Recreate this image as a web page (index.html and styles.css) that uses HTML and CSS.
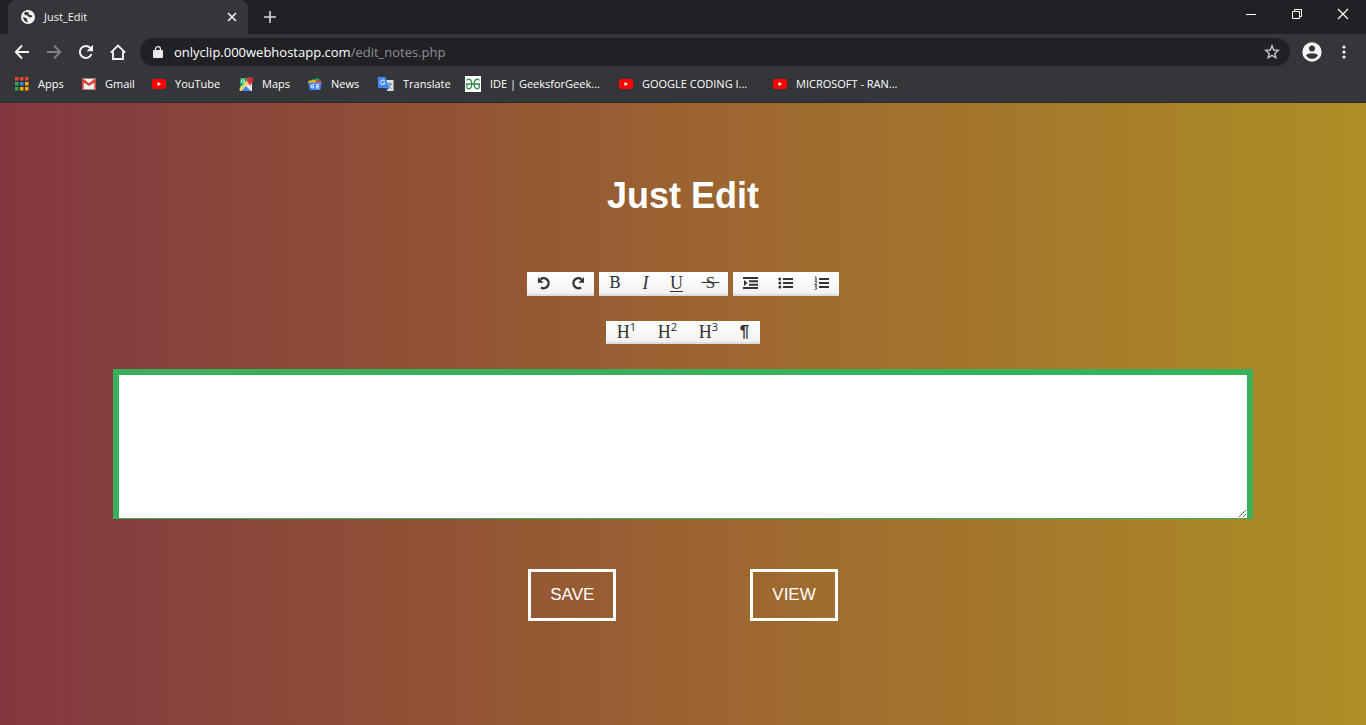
FILE: index.html
```html
<!DOCTYPE html>
<html lang="en">
<head>
<meta charset="utf-8">
<title>Just_Edit</title>
<link rel="stylesheet" href="styles.css">
</head>
<body>
<header class="browser">
  <div class="tabstrip">
    <div class="tab">
      <svg class="globe" viewBox="0 0 14 14"><circle cx="7" cy="7" r="7" fill="#f1f3f4"/><path d="M4 1.800 3 4l1.500 1.300 2.200.3 1 1.400 2.300.4 1.200-1.200-1-1.200-2-.2-.7-1.100.6-1.300z" fill="#35363a"/><path d="M1.800 7l2.700.8 1.800 1.200-.2 1.600 1.100 1.600-2-.2-2-1.500z" fill="#35363a"/></svg>
      <span class="tab-title">Just_Edit</span>
      <button class="icon-btn" aria-label="Close tab"><svg width="10" height="10" viewBox="0 0 10 10"><path d="m1 1 8 8M9 1 1 9" stroke="#f1f3f4" stroke-width="1.6"/></svg></button>
    </div>
    <button class="icon-btn new-tab" aria-label="New tab"><svg width="12" height="12" viewBox="0 0 12 12"><path d="M6 0v12M0 6h12" stroke="#d5d7da" stroke-width="1.6"/></svg></button>
    <div class="window-controls">
      <button class="icon-btn" aria-label="Minimize"><svg width="12" height="12" viewBox="0 0 12 12"><path d="M1 6.5h10" stroke="#fff"/></svg></button>
      <button class="icon-btn" aria-label="Restore"><svg width="12" height="12" viewBox="0 0 12 12"><path d="M1.500 3.500h7v7h-7zM3.500 3.500v-2h7v7h-2" stroke="#fff" fill="none"/></svg></button>
      <button class="icon-btn" aria-label="Close"><svg width="12" height="12" viewBox="0 0 12 12"><path d="m1 1 10 10M11 1 1 11" stroke="#fff" stroke-width="1.2"/></svg></button>
    </div>
  </div>
  <div class="navbar">
    <nav class="nav-buttons">
      <button class="icon-btn" aria-label="Back"><svg width="16" height="16" viewBox="0 0 16 16"><path d="M15 8H2M8 1.500 1.800 8 8 14.500" stroke="#f1f3f4" stroke-width="1.900" fill="none"/></svg></button>
      <button class="icon-btn" aria-label="Forward"><svg width="16" height="16" viewBox="0 0 16 16"><path d="M1 8h13M8 1.500 14.200 8 8 14.500" stroke="#808285" stroke-width="1.900" fill="none"/></svg></button>
      <button class="icon-btn" aria-label="Reload"><svg width="16" height="16" viewBox="0 0 16 16"><path d="M13.500 10A6 6 0 1 1 12.400 4" stroke="#f1f3f4" stroke-width="2" fill="none"/><path d="M15 .8v6.500H8.500z" fill="#f1f3f4"/></svg></button>
      <button class="icon-btn" aria-label="Home"><svg width="16" height="16" viewBox="0 0 16 16"><path d="M.8 8.700 8 1.500l7.200 7.200M3 7.500v7.500h10V7.500" stroke="#f1f3f4" stroke-width="1.900" fill="none"/></svg></button>
    </nav>
    <div class="address">
      <svg width="10" height="12" viewBox="0 0 10 12"><path d="M1 4h8q1 0 1 1v6q0 1-1 1H1q-1 0-1-1V5q0-1 1-1z" fill="#e8eaed"/><path d="M2.500 5V3a2.500 2.300 0 0 1 5 0v2" fill="none" stroke="#e8eaed" stroke-width="1.300"/></svg>
      <span class="url">onlyclip.000webhostapp.com<span class="path">/edit_notes.php</span></span>
      <button class="icon-btn" aria-label="Bookmark this page"><svg width="16" height="16" viewBox="0 0 16 16"><path d="m8 1.800 1.700 4.200 4.500.4-3.400 3 1.100 4.400L8 11.400l-3.900 2.400 1.100-4.400-3.400-3L6.300 6z" fill="none" stroke="#c4c7ca" stroke-width="1.400"/></svg></button>
    </div>
    <button class="icon-btn profile" aria-label="Profile"><svg width="20" height="20" viewBox="0 0 20 20"><circle cx="10" cy="10" r="9.700" fill="#f1f3f4"/><circle cx="10" cy="6.500" r="3" fill="#35363a"/><path d="M4 13.600c1.500-3 10.500-3 12 0a7.200 7.200 0 0 1-12 0z" fill="#35363a"/></svg></button>
    <button class="icon-btn menu" aria-label="Menu"><svg width="4" height="14" viewBox="0 0 4 14"><g fill="#f1f3f4"><circle cx="2" cy="2" r="1.600"/><circle cx="2" cy="7" r="1.600"/><circle cx="2" cy="12" r="1.600"/></g></svg></button>
  </div>
  <nav class="bookmarks">
    <a class="bookmark" href="#"><svg class="mark" viewBox="0 0 14 14"><path d="M0 0h3.500v3.500H0zM5 0h3.500v3.500H5zM10 0h3.500v3.500H10z" fill="#ea4335"/><path d="M0 5h3.500v3.500H0zM0 10h3.500v3.500H0z" fill="#34a853"/><path d="M5 5h3.500v3.500H5z" fill="#2b88f5"/><path d="M10 5h3.500v3.500H10zM5 10h3.500v3.500H5zM10 10h3.500v3.500H10z" fill="#f9ab00"/></svg>Apps</a>
    <a class="bookmark" href="#"><svg class="mark" viewBox="0 0 14 14"><path d="M0 1.500h14v11H0z" fill="#eceff1"/><path d="M0 12.500v-10l1-1 6 4.700 6-4.700 1 1v10h-1.700v-7L7 9 1.700 5.500v7z" fill="#dc4335"/></svg>Gmail</a>
    <a class="bookmark" href="#"><svg class="mark" viewBox="0 0 14 14"><rect y="2" width="14" height="10" rx="2" fill="red"/><path d="M5.500 5v4L9.200 7z" fill="#fff"/></svg>YouTube</a>
    <a class="bookmark" href="#"><svg class="mark" viewBox="0 0 14 14"><path d="M1 1.500h12V14H1z" fill="#e8eaed"/><path d="M1 1.500h9L1 11z" fill="#159e58"/><path d="m2 14 5-5 5 5z" fill="#4285f4"/><path d="m0 12.500 9-9 1.500 2L2 14z" fill="#ffd34d"/><circle cx="4" cy="4.300" r="1.600" fill="none" stroke="#fff"/><path d="M11 9C10 6.500 8 5.500 8 3.200a3 3 0 0 1 6 0C14 5.500 12 6.500 11 9z" fill="#e53935"/><circle cx="11" cy="3.200" r="1" fill="#8e211c"/></svg>Maps</a>
    <a class="bookmark" href="#"><svg class="mark" viewBox="0 0 14 14"><path d="m2 3 9-2 1 5H2z" fill="#16a765"/><path d="m7 3 6.500 1-1 6-6-2z" fill="#ea4335"/><path d="m0 4 7-1 2 5H1z" fill="#fbbc04"/><path d="M.5 5.500h13l-1 7.500h-11z" fill="#4385f5"/><path d="M6 7.800H4.500a1.500 1.500 0 1 0 1.500 1.500H4.700M8 7.700h3M8 9.400h3M8 11h3" fill="none" stroke="#fff"/></svg>News</a>
    <a class="bookmark" href="#"><svg class="mark wide" viewBox="0 0 16 14"><path d="M6 3h9.500v11H9z" fill="#dce0e5"/><path d="M9 7h5M11.500 5.500V7M13 7c-.5 2-2 3-3 4M10 8c1 2 2 2.500 3.500 3.500" stroke="#607d8b" fill="none"/><path d="M0 0h7.500L11 11H1q-1 0-1-1z" fill="#4688f1"/><path d="M6.700 4A2.300 2.300 0 1 0 7 6H5" stroke="#fff" fill="none"/><path d="M7 11h4l-2 2.500z" fill="#174ea6"/></svg>Translate</a>
    <a class="bookmark" href="#"><svg class="mark wide" viewBox="0 0 16 16"><path d="M0 0h16v16H0z" fill="#fff"/><path d="M1.500 4.500C3 2 6.800 3 6.800 8S3 14 1.800 11.500M1 8h14M14.500 4.500C13 2 9.200 3 9.200 8s3.800 6 5 3.500V8.500M1.800 11.500V8.500" stroke="#2f8d46" stroke-width="1.300" fill="none"/></svg>IDE | GeeksforGeek...</a>
    <a class="bookmark" href="#"><svg class="mark" viewBox="0 0 14 14"><rect y="2" width="14" height="10" rx="2" fill="red"/><path d="M5.500 5v4L9.200 7z" fill="#fff"/></svg>GOOGLE CODING I...</a>
    <a class="bookmark" href="#"><svg class="mark" viewBox="0 0 14 14"><rect y="2" width="14" height="10" rx="2" fill="red"/><path d="M5.500 5v4L9.200 7z" fill="#fff"/></svg>MICROSOFT - RAN...</a>
  </nav>
</header>
<main class="editor-page">
  <h1 class="title">Just Edit</h1>
  <div class="toolbar">
    <div class="group history">
      <button class="tool" aria-label="Undo"><svg width="14" height="14" viewBox="0 0 14 14"><path d="M3.500 3.300A5 5 0 1 1 4 11.500" fill="none" stroke="#333" stroke-width="2.300"/><path d="M1 1v5.700h5.700z" fill="#333"/></svg></button>
      <button class="tool" aria-label="Redo"><svg width="14" height="14" viewBox="0 0 14 14"><path d="M10.500 3.300A5 5 0 1 0 10 11.500" fill="none" stroke="#333" stroke-width="2.300"/><path d="M13 1v5.700H7.300z" fill="#333"/></svg></button>
    </div>
    <div class="group format">
      <button class="tool bold">B</button>
      <button class="tool"><i>I</i></button>
      <button class="tool"><u>U</u></button>
      <button class="tool"><s>&nbsp;S&nbsp;</s></button>
    </div>
    <div class="group lists">
      <button class="tool" aria-label="Indent"><svg width="15" height="12" viewBox="0 0 15 12"><path d="M0 1h15M6 4.300h9M6 7.700h9M0 11h15" stroke="#333" stroke-width="2"/><path d="M1 3v6l3.500-3z" fill="#333"/></svg></button>
      <button class="tool" aria-label="Bulleted list"><svg width="15" height="12" viewBox="0 0 15 12"><path d="M5 2h10M5 6h10M5 10h10" stroke="#333" stroke-width="2"/><g fill="#333"><circle cx="1.800" cy="2" r="1.500"/><circle cx="1.800" cy="6" r="1.500"/><circle cx="1.800" cy="10" r="1.500"/></g></svg></button>
      <button class="tool" aria-label="Numbered list"><svg width="15" height="14" viewBox="0 0 15 14"><path d="M5 3h10M5 7h10M5 11h10" stroke="#333" stroke-width="2"/><path d="M1 1h1v3M.8 4h2.400M.7 5.500h1.800v1.200L.8 8.500h2.400M.7 10h2L1.500 11.300l1.200.6L2 13.400H.7" stroke="#333" stroke-width=".9" fill="none"/></svg></button>
    </div>
  </div>
  <div class="toolbar second">
    <div class="group blocks">
      <button class="tool">H<sup>1</sup></button>
      <button class="tool">H<sup>2</sup></button>
      <button class="tool">H<sup>3</sup></button>
      <button class="tool pilcrow">¶</button>
    </div>
  </div>
  <textarea class="note" aria-label="Note"></textarea>
  <div class="actions">
    <button class="action">SAVE</button>
    <button class="action">VIEW</button>
  </div>
</main>
</body>
</html>
```

FILE: styles.css
```css
* { box-sizing: border-box; }
body {
  margin: 0;
  min-height: 100vh;
  display: flex;
  flex-direction: column;
  font-family: "Liberation Sans", Arial, sans-serif;
}
button { margin: 0; padding: 0; border: 0; background: none; font: inherit; }
svg { display: block; flex: none; }

.browser {
  background: #35363a;
  border-bottom: 1px solid #292a2d;
  color: #f1f3f4;
  font: 12px/16px "Open Sans", sans-serif;
}
.icon-btn { display: flex; align-items: center; justify-content: center; }
.tabstrip { display: flex; align-items: center; height: 34px; padding-left: 8px; background: #202124; }
.tab {
  display: flex;
  align-items: center;
  gap: 9px;
  width: 240px;
  height: 34px;
  padding: 0 11px 0 13px;
  border-radius: 8px 8px 0 0;
  background: #35363a;
  font-size: 11px;
}
.globe { width: 14px; height: 14px; }
.tab-title { flex: 1; }
.new-tab { margin-left: 16px; }
.window-controls { display: flex; gap: 34px; margin-left: auto; padding: 0 17px 6px 0; }

.navbar { display: flex; align-items: center; height: 36px; padding: 0 20px 0 14px; }
.nav-buttons { display: flex; gap: 16px; }
.address {
  flex: 1;
  display: flex;
  align-items: center;
  height: 28px;
  margin-left: 14px;
  padding: 0 10px 0 13px;
  border-radius: 14px;
  background: #202124;
}
.url { flex: 1; padding-left: 11px; color: #fff; font-size: 13px; }
.path { color: #8d9094; }
.profile { margin-left: 12px; }
.menu { margin-left: 20px; }

.bookmarks {
  display: grid;
  grid-template-columns: 67px 70px 87px 69px 70px 87px 154px 154px 154px;
  align-items: center;
  height: 32px;
  padding: 0 0 4px 15px;
}
.bookmark {
  display: flex;
  align-items: center;
  gap: 9px;
  color: #fff;
  font-size: 11px;
  text-decoration: none;
  white-space: nowrap;
}
.mark { width: 14px; height: 14px; }
.mark.wide { width: 16px; height: 16px; }

.editor-page {
  flex: 1;
  display: flex;
  flex-direction: column;
  align-items: center;
  padding: 73px 24px 40px;
  background: linear-gradient(to right, #833740, #935634 36%, #9d6830 55%, #ae8e25);
}
.title { margin: 0; color: #fff; font-size: 36px; line-height: 40px; }
.toolbar { display: flex; gap: 5px; margin-top: 56px; }
.toolbar.second { margin-top: 25px; }
.group {
  display: grid;
  height: 24px;
  border-bottom: 2px solid #ddd;
  background: linear-gradient(#fff, #f2f2f2);
}
.history { grid-template-columns: 34px 33px; }
.format { grid-template-columns: 32px 29px 33px 35px; }
.lists { grid-template-columns: repeat(3, 1fr); width: 106px; }
.blocks { grid-template-columns: 41px 41px 41px 31px; height: 23px; }
.tool {
  display: flex;
  align-items: center;
  justify-content: center;
  color: #333;
  font: 18px/20px "Liberation Serif", "Times New Roman", serif;
}
.tool.bold { font-family: "DejaVu Serif", serif; font-size: 16px; }
.tool u { text-underline-offset: 2px; }
.tool s { font-size: 17px; }
.tool sup { align-self: flex-start; font: 11px/12px "Noto Sans", sans-serif; }
.tool.pilcrow { font-family: "Liberation Sans", sans-serif; font-size: 17px; font-weight: bold; }
.note {
  display: block;
  width: 100%;
  max-width: 1140px;
  height: 150px;
  margin-top: 25px;
  border: 6px solid #39b05c;
  border-bottom-width: 1px;
  background: #fff;
}
.actions { display: flex; gap: 134px; margin-top: 50px; }
.action {
  padding: 13px 19px;
  border: 3px solid #fff;
  color: #fff;
  font-size: 17px;
  line-height: 20px;
}
```
